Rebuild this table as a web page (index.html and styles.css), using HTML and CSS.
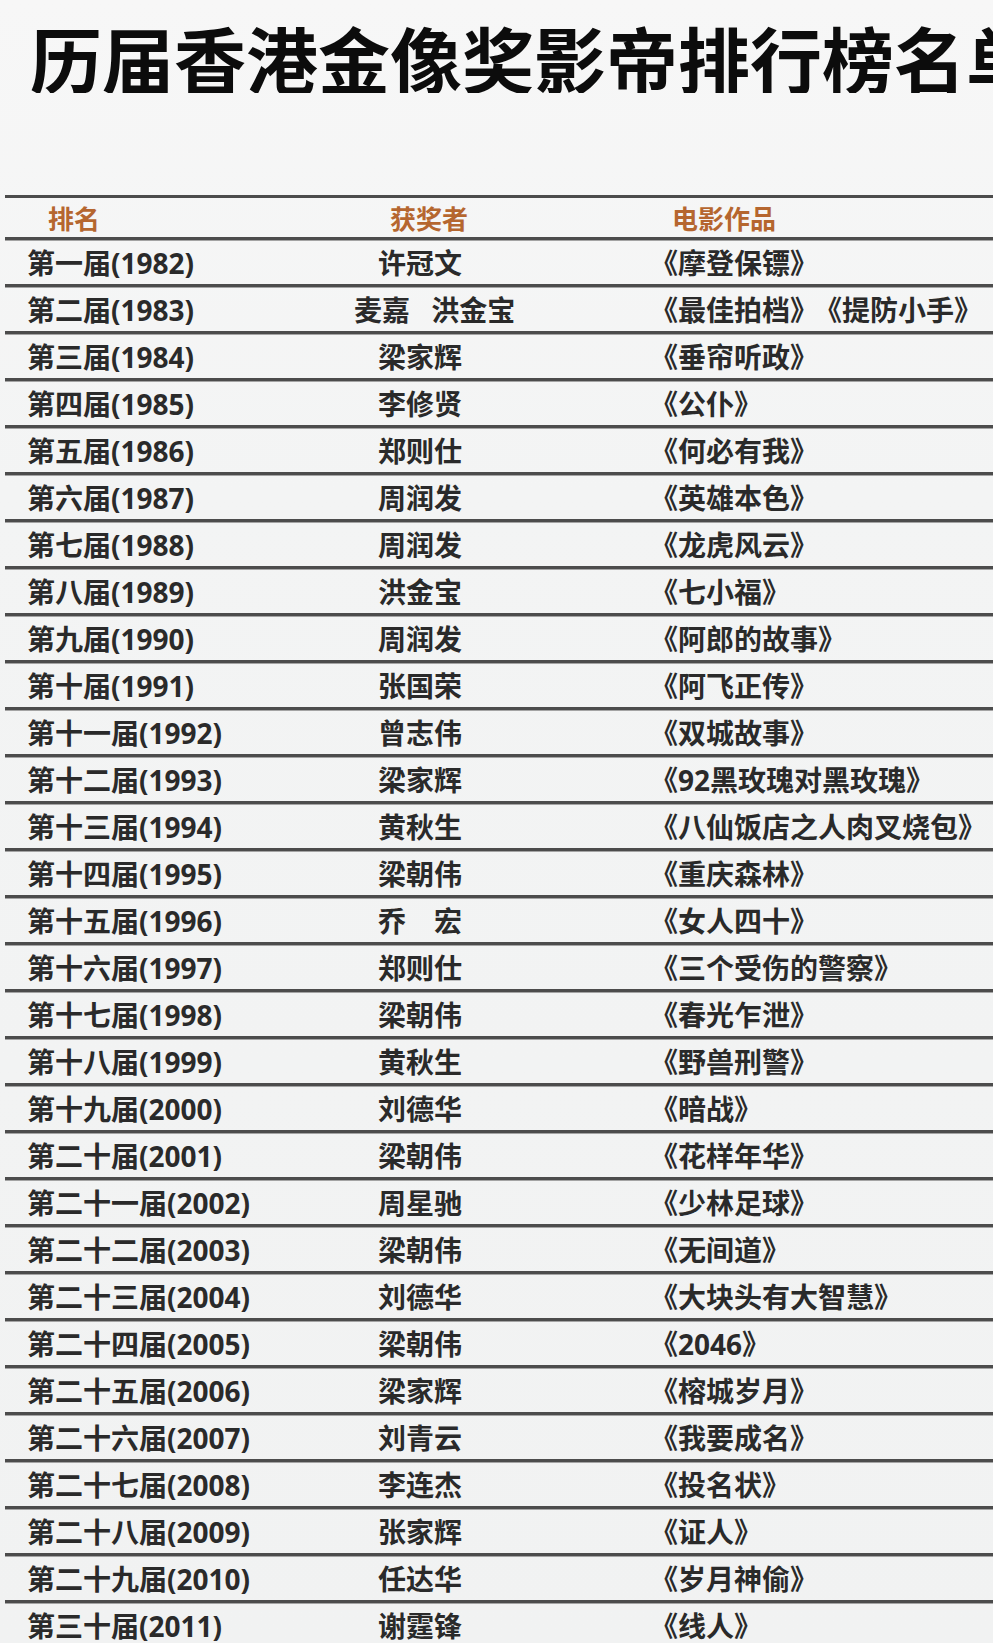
FILE: index.html
```html
<!DOCTYPE html>
<html lang="zh-CN">
<head>
<meta charset="utf-8">
<title>历届香港金像奖影帝排行榜名单</title>
<link rel="stylesheet" href="styles.css">
</head>
<body>
<div class="page">
  <h1 class="title">历届香港金像奖影帝排行榜名单</h1>
  <div class="table">
    <div class="row head">
      <div class="c1">排名</div>
      <div class="c2">获奖者</div>
      <div class="c3">电影作品</div>
    </div>
    <div class="row"><div class="c1">第一届(1982)</div><div class="c2">许冠文</div><div class="c3">《摩登保镖》</div></div>
    <div class="row"><div class="c1">第二届(1983)</div><div class="c2 pair">麦嘉&ensp;&nbsp;洪金宝</div><div class="c3">《最佳拍档》<span class="next">《提防小手》</span></div></div>
    <div class="row"><div class="c1">第三届(1984)</div><div class="c2">梁家辉</div><div class="c3">《垂帘听政》</div></div>
    <div class="row"><div class="c1">第四届(1985)</div><div class="c2">李修贤</div><div class="c3">《公仆》</div></div>
    <div class="row"><div class="c1">第五届(1986)</div><div class="c2">郑则仕</div><div class="c3">《何必有我》</div></div>
    <div class="row"><div class="c1">第六届(1987)</div><div class="c2">周润发</div><div class="c3">《英雄本色》</div></div>
    <div class="row"><div class="c1">第七届(1988)</div><div class="c2">周润发</div><div class="c3">《龙虎风云》</div></div>
    <div class="row"><div class="c1">第八届(1989)</div><div class="c2">洪金宝</div><div class="c3">《七小福》</div></div>
    <div class="row"><div class="c1">第九届(1990)</div><div class="c2">周润发</div><div class="c3">《阿郎的故事》</div></div>
    <div class="row"><div class="c1">第十届(1991)</div><div class="c2">张国荣</div><div class="c3">《阿飞正传》</div></div>
    <div class="row"><div class="c1">第十一届(1992)</div><div class="c2">曾志伟</div><div class="c3">《双城故事》</div></div>
    <div class="row"><div class="c1">第十二届(1993)</div><div class="c2">梁家辉</div><div class="c3">《92黑玫瑰对黑玫瑰》</div></div>
    <div class="row"><div class="c1">第十三届(1994)</div><div class="c2">黄秋生</div><div class="c3">《八仙饭店之人肉叉烧包》</div></div>
    <div class="row"><div class="c1">第十四届(1995)</div><div class="c2">梁朝伟</div><div class="c3">《重庆森林》</div></div>
    <div class="row"><div class="c1">第十五届(1996)</div><div class="c2">乔　宏</div><div class="c3">《女人四十》</div></div>
    <div class="row"><div class="c1">第十六届(1997)</div><div class="c2">郑则仕</div><div class="c3">《三个受伤的警察》</div></div>
    <div class="row"><div class="c1">第十七届(1998)</div><div class="c2">梁朝伟</div><div class="c3">《春光乍泄》</div></div>
    <div class="row"><div class="c1">第十八届(1999)</div><div class="c2">黄秋生</div><div class="c3">《野兽刑警》</div></div>
    <div class="row"><div class="c1">第十九届(2000)</div><div class="c2">刘德华</div><div class="c3">《暗战》</div></div>
    <div class="row"><div class="c1">第二十届(2001)</div><div class="c2">梁朝伟</div><div class="c3">《花样年华》</div></div>
    <div class="row"><div class="c1">第二十一届(2002)</div><div class="c2">周星驰</div><div class="c3">《少林足球》</div></div>
    <div class="row"><div class="c1">第二十二届(2003)</div><div class="c2">梁朝伟</div><div class="c3">《无间道》</div></div>
    <div class="row"><div class="c1">第二十三届(2004)</div><div class="c2">刘德华</div><div class="c3">《大块头有大智慧》</div></div>
    <div class="row"><div class="c1">第二十四届(2005)</div><div class="c2">梁朝伟</div><div class="c3">《2046》</div></div>
    <div class="row"><div class="c1">第二十五届(2006)</div><div class="c2">梁家辉</div><div class="c3">《榕城岁月》</div></div>
    <div class="row"><div class="c1">第二十六届(2007)</div><div class="c2">刘青云</div><div class="c3">《我要成名》</div></div>
    <div class="row"><div class="c1">第二十七届(2008)</div><div class="c2">李连杰</div><div class="c3">《投名状》</div></div>
    <div class="row"><div class="c1">第二十八届(2009)</div><div class="c2">张家辉</div><div class="c3">《证人》</div></div>
    <div class="row"><div class="c1">第二十九届(2010)</div><div class="c2">任达华</div><div class="c3">《岁月神偷》</div></div>
    <div class="row"><div class="c1">第三十届(2011)</div><div class="c2">谢霆锋</div><div class="c3">《线人》</div></div>
  </div>
</div>
</body>
</html>
```

FILE: styles.css
```css
html, body {
  margin: 0;
  padding: 0;
}
body {
  background: #f3f4f4;
  font-family: "Noto Sans", "Noto Sans CJK SC", sans-serif;
  color: #2a2a2a;
  overflow: hidden;
}
.page {
  width: 993px;
  height: 1643px;
  overflow: hidden;
  background: linear-gradient(180deg, #f7f7f7 0%, #f3f4f4 30%, #f1f2f2 100%);
}
.title {
  margin: 0;
  padding: 21px 0 0 30px;
  height: 72px;
  font-family: "Noto Sans CJK SC", sans-serif;
  font-size: 72px;
  line-height: 72px;
  font-weight: 700;
  color: #0c0c0c;
  white-space: nowrap;
  overflow: hidden;
}
.table {
  margin: 102px 0 0 5px;
  border-top: 3px solid #4c4c4c;
}
.row {
  display: grid;
  grid-template-columns: 305px 176px 1fr;
  align-items: center;
  height: 44px;
  padding-left: 22px;
  border-top: 3px solid #4c4c4c;
  box-shadow: inset 0 1px 0 #a4a4a4;
  font-size: 28px;
  font-weight: 700;
  white-space: nowrap;
}
.row.head {
  height: 39px;
  border-top: none;
  box-shadow: none;
  font-size: 26px;
  color: #b5662f;
}
.c2 {
  text-align: center;
}
.c2.pair {
  padding-left: 22px;
}
.c3 {
  padding-left: 142px;
}
.next {
  margin-left: 10px;
}
.head .c1 {
  padding-left: 21px;
}
.head .c2 {
  padding-left: 18px;
}
.head .c3 {
  padding-left: 164px;
}
```
